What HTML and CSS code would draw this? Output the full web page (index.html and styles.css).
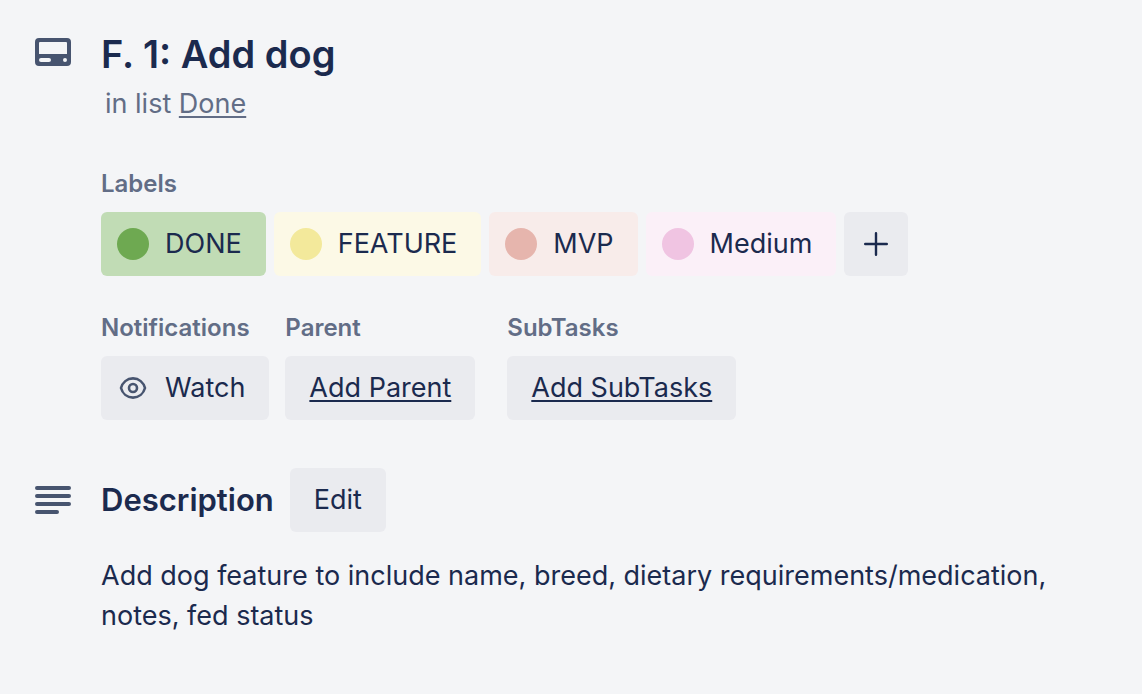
FILE: index.html
```html
<!DOCTYPE html>
<html lang="en">
<head>
<meta charset="utf-8">
<title>F. 1: Add dog</title>
<link rel="stylesheet" href="styles.css">
</head>
<body>
<main class="card">
  <header class="card-header">
    <svg class="side-icon" viewBox="0 0 36 36" aria-hidden="true"><path fill="currentColor" fill-rule="evenodd" d="M4 4H32Q36 4 36 8V28Q36 32 32 32H4Q0 32 0 28V8Q0 4 4 4ZM5 8Q4 8 4 9V20H32V9Q32 8 31 8ZM6 24A2 2 0 0 0 6 28H14A2 2 0 0 0 14 24ZM30 24A2 2 0 1 0 30 28A2 2 0 1 0 30 24Z"/></svg>
    <div>
      <h1 class="title">F. 1: Add dog</h1>
      <p class="location">in list <a href="#done">Done</a></p>
    </div>
  </header>
  <div class="details">
    <section>
      <h2 class="caption">Labels</h2>
      <div class="labels">
        <button class="chip chip-green" type="button"><span class="dot"></span>DONE</button>
        <button class="chip chip-yellow" type="button"><span class="dot"></span>FEATURE</button>
        <button class="chip chip-red" type="button"><span class="dot"></span>MVP</button>
        <button class="chip chip-pink" type="button"><span class="dot"></span>Medium</button>
        <button class="add" type="button" aria-label="Add label"><svg class="plus" viewBox="0 0 24 24" aria-hidden="true"><path d="M12 1.2V22.8M1.2 12H22.8" fill="none" stroke="currentColor" stroke-width="2.4" stroke-linecap="round"/></svg></button>
      </div>
    </section>
    <div class="fields">
      <section>
        <h2 class="caption">Notifications</h2>
        <button class="button watch" type="button"><svg class="eye" viewBox="0 0 32 32" aria-hidden="true"><g fill="none" stroke="currentColor" stroke-width="2.6"><path d="M4 16C5.5 10.5 10 6.4 16 6.4S26.500 10.500 28 16C26.500 21.500 22 25.600 16 25.600S5.500 21.500 4 16Z"/><circle cx="16" cy="16" r="4"/></g></svg>Watch</button>
      </section>
      <section class="parent">
        <h2 class="caption">Parent</h2>
        <a class="button" href="#parent">Add Parent</a>
      </section>
      <section>
        <h2 class="caption">SubTasks</h2>
        <a class="button" href="#subtasks">Add SubTasks</a>
      </section>
    </div>
  </div>
  <section class="description">
    <div class="description-header">
      <svg class="side-icon" viewBox="0 0 36 36" aria-hidden="true"><path d="M2 6H34M2 14H34M2 22H34M2 30H22" fill="none" stroke="currentColor" stroke-width="4" stroke-linecap="round"/></svg>
      <h2 class="section-title">Description</h2>
      <button class="button" type="button">Edit</button>
    </div>
    <p class="text">Add dog feature to include name, breed, dietary requirements/medication, notes, fed status</p>
  </section>
</main>
</body>
</html>
```
FILE: styles.css
```css
* { box-sizing: border-box; }
body {
  margin: 0;
  background: #f4f5f7;
  color: #1b2a4e;
  font: 27px/40px Inter, "Liberation Sans", sans-serif;
}
h1, h2, p { margin: 0; }
button { font: inherit; color: inherit; border: 0; cursor: pointer; }
.card { padding: 32px 72px 32px 35px; }
.card-header { display: flex; gap: 30px; }
.side-icon { width: 36px; height: 36px; flex: none; color: #47546f; }
.card-header .side-icon { margin-top: 2px; }
.title { font-size: 38px; line-height: 44px; font-weight: 600; }
.location { padding: 8px 4px 0; color: #626d86; }
.location a { color: inherit; }
a { text-decoration-thickness: 2px; text-underline-offset: 3px; }
.details { padding: 40px 0 0 66px; display: grid; gap: 32px; }
.caption { font-size: 24px; line-height: 40px; font-weight: 600; color: #626d86; margin-bottom: 8px; }
.labels { display: flex; flex-wrap: wrap; gap: 8px; }
.chip, .button, .add { display: flex; align-items: center; height: 64px; border-radius: 6px; }
.chip { gap: 16px; padding: 0 24px 0 16px; }
.dot { width: 32px; height: 32px; border-radius: 50%; }
.chip-green { background: #c1dcb5; }
.chip-green .dot { background: #6ea951; }
.chip-yellow { background: #fcf9e6; }
.chip-yellow .dot { background: #f3e99b; }
.chip-red { background: #f8ecea; }
.chip-red .dot { background: #e6b5ad; }
.chip-pink { background: #fbf0f8; }
.chip-pink .dot { background: #f0c4e2; }
.add { width: 64px; padding: 0; justify-content: center; background: #eaebef; }
.plus { width: 24px; height: 24px; }
.fields { display: flex; flex-wrap: wrap; gap: 16px; }
.parent { margin-right: 16px; }
.button { padding: 0 24px; background: #eaebef; color: inherit; }
.watch { gap: 16px; padding-left: 16px; }
.eye { width: 32px; height: 32px; color: #47546f; }
.description { padding-top: 48px; }
.description-header { display: flex; align-items: center; }
.section-title { margin: 0 16px 0 30px; font-size: 31px; font-weight: 600; }
.text { padding: 24px 0 0 66px; }
```
